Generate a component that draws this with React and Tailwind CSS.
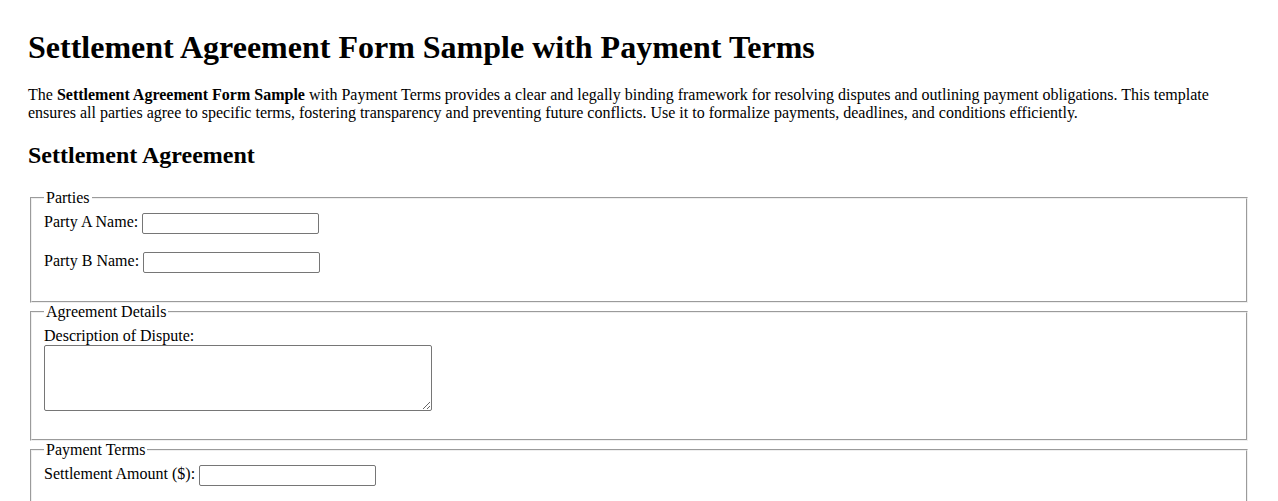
// Settlement agreement sample page: intro text plus a plain fieldset form.

const serif = "font-['Liberation_Serif','Times_New_Roman',serif]";

function TextInput({ id, type = 'text' }) {
  return (
    <input
      id={id}
      name={id}
      type={type}
      className="h-[21px] w-[177px] rounded-[2px] border border-[#767676] bg-white px-[2px] py-[1px] align-middle text-[13.33px]"
    />
  );
}

function Group({ legend, children }) {
  return (
    <fieldset className="mx-[2px] border-2 border-[color:ThreeDFace] [border-style:groove] px-[12px] pt-[6px] pb-[10px]">
      <legend className="px-[2px]">{legend}</legend>
      {children}
    </fieldset>
  );
}

export default function App() {
  return (
    <div className={`${serif} px-[28px] pt-[8px] pb-8 text-[16px] leading-[normal] text-black bg-white`}>
      <h1 className="mt-[21px] mb-[20px] text-[32px] font-bold">
        Settlement Agreement Form Sample with Payment Terms
      </h1>
      <p className="my-4">
        The <strong>Settlement Agreement Form Sample</strong> with Payment Terms provides a clear and
        legally binding framework for resolving disputes and outlining payment obligations. This
        template ensures all parties agree to specific terms, fostering transparency and preventing
        future conflicts. Use it to formalize payments, deadlines, and conditions efficiently.
      </p>

      <h2 className="mt-[20px] mb-[20px] text-[24px] font-bold">Settlement Agreement</h2>

      <form>
        <Group legend="Parties">
          <label htmlFor="partyA">Party A Name: </label>
          <TextInput id="partyA" />
          <br />
          <br />
          <label htmlFor="partyB">Party B Name: </label>
          <TextInput id="partyB" />
          <br />
          <br />
        </Group>

        <Group legend="Agreement Details">
          <label htmlFor="dispute">Description of Dispute:</label>
          <br />
          <textarea
            id="dispute"
            name="dispute"
            className="h-[66px] w-[388px] rounded-[2px] border border-[#767676] bg-white align-bottom text-[13.33px]"
          />
          <br />
          <br />
        </Group>

        <Group legend="Payment Terms">
          <label htmlFor="amount">Settlement Amount ($): </label>
          <TextInput id="amount" type="number" />
          <br />
          <br />
          <label htmlFor="dueDate">Payment Due Date: </label>
          <TextInput id="dueDate" />
          <br />
          <br />
        </Group>
      </form>
    </div>
  );
}
